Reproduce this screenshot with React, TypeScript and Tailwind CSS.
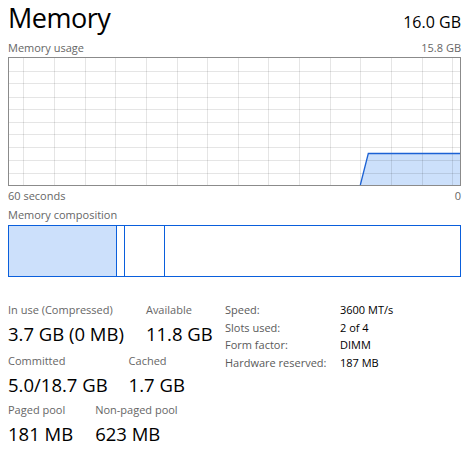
const gridX = [15, 46, 77, 107, 138, 169, 199, 230, 260, 291, 322, 352, 383, 414, 444];
const gridY = [14, 26, 40, 52, 65, 77, 90, 103, 116];

function UsageGraph() {
  return (
    <svg width="453" height="129" viewBox="0 0 453 129" className="block">
      <rect x="0" y="0" width="453" height="129" fill="#ffffff" />
      <polygon points="352.3,128 360.3,96.5 452,96.5 452,128" fill="#cce0fb" />
      {gridX.map((x) => (
        <line key={`x${x}`} x1={x + 0.5} y1="1" x2={x + 0.5} y2="128" stroke="rgba(0,0,0,0.1)" strokeWidth="1" />
      ))}
      {gridY.map((y) => (
        <line key={`y${y}`} x1="1" y1={y + 0.5} x2="452" y2={y + 0.5} stroke="rgba(0,0,0,0.1)" strokeWidth="1" />
      ))}
      <polyline points="352.3,128 360.3,96.5 452,96.5" fill="none" stroke="#1c62d4" strokeWidth="1.3" />
      <rect x="0.5" y="0.5" width="452" height="128" fill="none" stroke="#8b8b8b" strokeWidth="1" />
    </svg>
  );
}

function Stat({ label, value }: { label: string; value: string }) {
  return (
    <div>
      <div className="text-[11px] leading-[16px] text-[#666666]">{label}</div>
      <div className="mt-[4px] text-[18.5px] leading-[24px] text-black">{value}</div>
    </div>
  );
}

const details = [
  ['Speed:', '3600 MT/s'],
  ['Slots used:', '2 of 4'],
  ['Form factor:', 'DIMM'],
  ['Hardware reserved:', '187 MB'],
];

export default function App() {
  return (
    <div
      className="w-[469px] h-[452px] bg-white px-2 overflow-hidden"
      style={{ fontFamily: '"Segoe UI", "Open Sans", "Noto Sans", sans-serif' }}
    >
      {/* Header */}
      <div className="flex items-baseline justify-between">
        <h1 className="text-[27px] leading-[36px] tracking-[-0.5px] text-black">Memory</h1>
        <span className="text-[16px] text-black">16.0 GB</span>
      </div>

      {/* Usage graph */}
      <div className="mt-1 flex justify-between text-[11px] leading-[16px] text-[#666666]">
        <span>Memory usage</span>
        <span>15.8 GB</span>
      </div>
      <div className="mt-px">
        <UsageGraph />
      </div>
      <div className="mt-[2px] flex justify-between text-[11px] leading-[16px] text-[#666666]">
        <span>60 seconds</span>
        <span>0</span>
      </div>

      {/* Composition */}
      <div className="mt-[3px] text-[11px] leading-[16px] text-[#666666]">Memory composition</div>
      <div className="mt-[2px] flex h-[52px] border border-[#0a5fdc]">
        <div className="w-[108px] shrink-0 border-r border-[#0a5fdc] bg-[#cce0fb]"></div>
        <div className="w-[8px] shrink-0 border-r border-[#0a5fdc]"></div>
        <div className="w-[40px] shrink-0 border-r border-[#0a5fdc]"></div>
        <div className="flex-1"></div>
      </div>

      {/* Stats */}
      <div className="mt-[25px] flex">
        <div className="w-[217px] shrink-0">
          <div className="flex gap-[22px]">
            <Stat label="In use (Compressed)" value="3.7 GB (0 MB)" />
            <Stat label="Available" value="11.8 GB" />
          </div>
          <div className="mt-[7px] flex gap-[21px]">
            <Stat label="Committed" value="5.0/18.7 GB" />
            <Stat label="Cached" value="1.7 GB" />
          </div>
          <div className="mt-[5px] flex gap-[22px]">
            <Stat label="Paged pool" value="181 MB" />
            <Stat label="Non-paged pool" value="623 MB" />
          </div>
        </div>
        <div className="-mt-px">
          {details.map(([k, v]) => (
            <div key={k} className="flex text-[11px] leading-[17.7px]">
              <span className="w-[115px] shrink-0 text-[#5a5a5a]">{k}</span>
              <span className="text-black">{v}</span>
            </div>
          ))}
        </div>
      </div>
    </div>
  );
}
